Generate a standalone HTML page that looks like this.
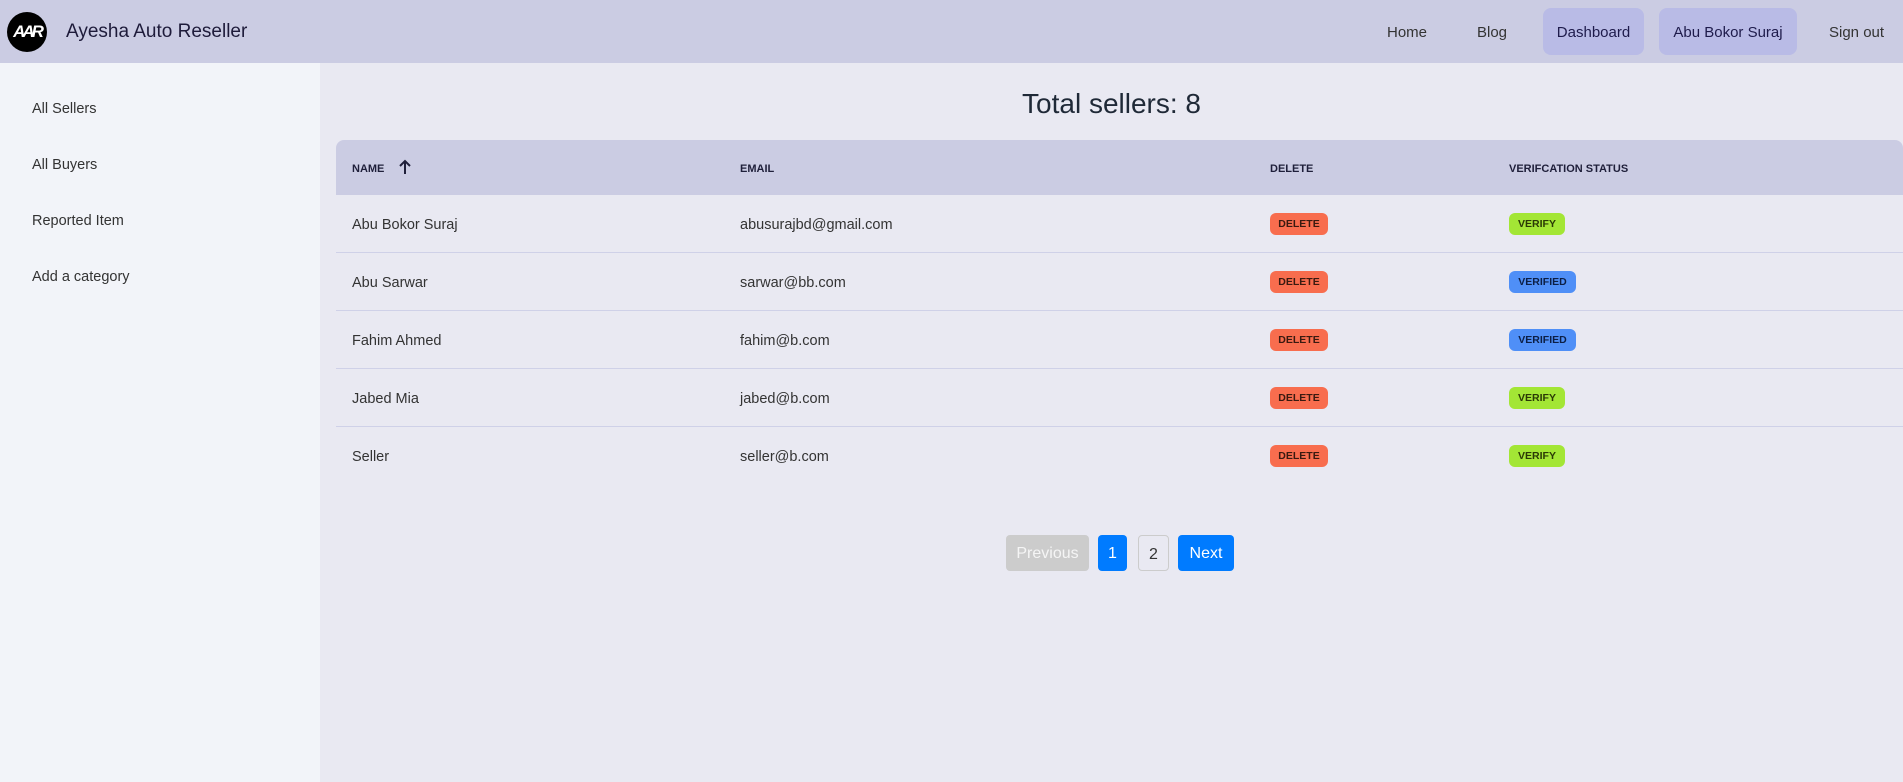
<!DOCTYPE html>
<html><head><meta charset="utf-8"><style>
*{box-sizing:border-box;margin:0;padding:0}
body{width:1903px;height:782px;overflow:hidden;font-family:"Liberation Sans",sans-serif;color:#1f2937;background:#e9e9f2;position:relative}
.nav{position:absolute;left:0;top:0;width:1903px;height:63px;background:#cbcce3}
.logo{position:absolute;left:7px;top:12px;width:40px;height:40px;border-radius:50%;background:#000;color:#fff;font-weight:bold;font-size:17px;line-height:40px;text-align:center;letter-spacing:-3px;font-style:italic}
.brand{position:absolute;left:66px;top:21px;font-size:19px;color:#1e1b3a}
.nl{position:absolute;top:24px;font-size:15px;color:#333}
.nb{position:absolute;top:8px;height:47px;background:#b9bbe6;border-radius:8px;font-size:15px;line-height:49px;text-align:center;color:#1e1b4b}
.side{position:absolute;left:0;top:63px;width:320px;height:719px;background:#f2f4f9}
.side div{position:absolute;left:32px;font-size:14.5px;color:#333}
h1{position:absolute;left:320px;width:1583px;top:88px;text-align:center;font-weight:normal;font-size:28px;color:#1f2937}
.th{position:absolute;left:336px;top:140px;width:1567px;height:55px;background:#cbcce3;border-radius:8px 8px 0 0}
.h{position:absolute;top:163px;font-size:11px;font-weight:bold;color:#1f1f3a}
.row{position:absolute;left:336px;width:1567px;height:58px;border-bottom:1px solid #cfd1e8}
.row span{position:absolute;top:22px;font-size:14.5px;color:#333}
.b{position:absolute;top:18px;height:22px;border-radius:6px;font-size:10.5px;line-height:22px;text-align:center;color:#3a1a10;font-weight:bold}
.del{left:934px;width:58px;background:#f86d4e}
.vf{left:1173px;width:56px;background:#a3e635;color:#2a3a05}
.vd{left:1173px;width:67px;background:#4f8ff7;color:#0c1f45}
.pg{position:absolute;top:535px;height:36px;border-radius:4px;font-size:16px;line-height:37px;text-align:center}
</style></head><body>
<div class="nav">
<div class="logo">AAR</div>
<div class="brand">Ayesha Auto Reseller</div>
<div class="nl" style="left:1387px">Home</div>
<div class="nl" style="left:1477px">Blog</div>
<div class="nb" style="left:1543px;width:101px">Dashboard</div>
<div class="nb" style="left:1659px;width:138px">Abu Bokor Suraj</div>
<div class="nl" style="left:1829px">Sign out</div>
</div>
<div class="side">
<div style="top:38px">All Sellers</div>
<div style="top:94px">All Buyers</div>
<div style="top:150px">Reported Item</div>
<div style="top:206px">Add a category</div>
</div>
<h1>Total sellers: 8</h1>
<div class="th"></div>
<div class="h" style="left:352px">NAME</div>
<svg style="position:absolute;left:398px;top:159px" width="14" height="16" viewBox="0 0 14 16"><path d="M7 15V2M2 7l5-5 5 5" stroke="#1f1f3a" stroke-width="2" fill="none"/></svg>
<div class="h" style="left:740px">EMAIL</div>
<div class="h" style="left:1270px">DELETE</div>
<div class="h" style="left:1509px">VERIFCATION STATUS</div>
<div class="row" style="top:195px"><span style="left:16px">Abu Bokor Suraj</span><span style="left:404px">abusurajbd@gmail.com</span><div class="b del">DELETE</div><div class="b vf">VERIFY</div></div>
<div class="row" style="top:253px"><span style="left:16px">Abu Sarwar</span><span style="left:404px">sarwar@bb.com</span><div class="b del">DELETE</div><div class="b vd">VERIFIED</div></div>
<div class="row" style="top:311px"><span style="left:16px">Fahim Ahmed</span><span style="left:404px">fahim@b.com</span><div class="b del">DELETE</div><div class="b vd">VERIFIED</div></div>
<div class="row" style="top:369px"><span style="left:16px">Jabed Mia</span><span style="left:404px">jabed@b.com</span><div class="b del">DELETE</div><div class="b vf">VERIFY</div></div>
<div class="row" style="top:427px;border:none"><span style="left:16px">Seller</span><span style="left:404px">seller@b.com</span><div class="b del">DELETE</div><div class="b vf">VERIFY</div></div>
<div class="pg" style="left:1006px;width:83px;background:#cccccc;color:#f5f5f5">Previous</div>
<div class="pg" style="left:1098px;width:29px;background:#007bff;color:#fff">1</div>
<div class="pg" style="left:1138px;width:31px;border:1px solid #ccc;color:#333">2</div>
<div class="pg" style="left:1178px;width:56px;background:#007bff;color:#fff">Next</div>
</body></html>
